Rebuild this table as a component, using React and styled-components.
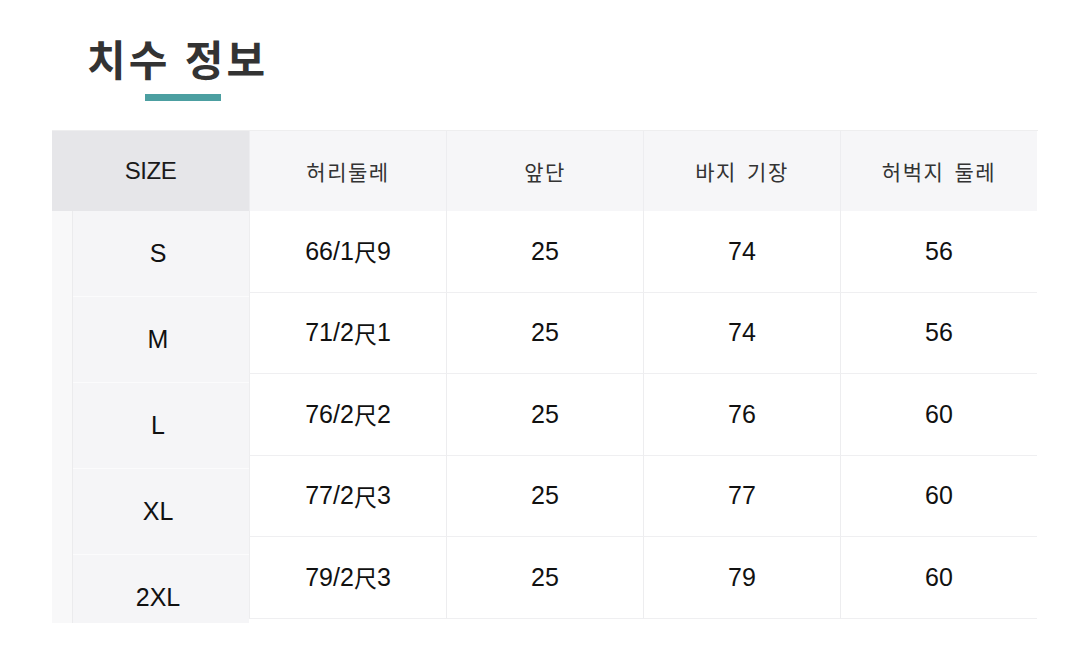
import React from "react";
import styled, { createGlobalStyle } from "styled-components";

const Global = createGlobalStyle`
  html, body { margin: 0; padding: 0; background: #ffffff; }
  body { font-family: "Liberation Sans", "Noto Sans CJK KR", sans-serif; }
`;

const Page = styled.div`
  width: 1089px;
  height: 652px;
  overflow: hidden;
  background: #fff;
  padding: 28px 0 0 52px;
  box-sizing: border-box;
`;

const TitleBlock = styled.div`
  display: flex;
  flex-direction: column;
  padding-left: 35px;
  height: 102px;
`;

const Title = styled.h1`
  margin: 0;
  font-family: "Noto Sans CJK KR", sans-serif;
  font-weight: 700;
  font-size: 42px;
  line-height: 60px;
  color: #333333;
  letter-spacing: 3px;
  word-spacing: 2px;
`;

const Underline = styled.div`
  width: 76px;
  height: 7px;
  background: #4c9fa1;
  margin: 6px 0 0 58px;
`;

const Table = styled.div`
  display: flex;
  width: 986px;
  height: 492px;
  overflow: hidden;
  border-top: 1px solid #eeeeef;
`;

const SizeCol = styled.div`
  width: 197px;
  display: flex;
  flex-direction: column;
  background: #f8f8f9;
  flex-shrink: 0;
`;

const SizeHead = styled.div`
  height: 80px;
  flex-shrink: 0;
  background: #e6e6e9;
  display: flex;
  align-items: center;
  justify-content: center;
  font-size: 24px;
  letter-spacing: -0.5px;
  color: #1a1a1a;
`;

const SizeBody = styled.div`
  flex: 1;
  min-height: 0;
  overflow: hidden;
  margin-left: 20px;
  border-left: 1px solid #ebebed;
  background: #f5f5f7;
  display: flex;
  flex-direction: column;
`;

const SizeCell = styled.div`
  height: 86px;
  flex-shrink: 0;
  display: flex;
  align-items: center;
  justify-content: center;
  padding-right: 6px;
  font-size: 25px;
  color: #111;
  border-bottom: 1px solid #fbfbfc;
  box-sizing: border-box;
`;

const Grid = styled.div`
  flex: 1;
  display: grid;
  grid-template-columns: repeat(4, 197px);
  grid-template-rows: 80px repeat(5, 81.5px);
`;

const HeadCell = styled.div`
  background: #f6f6f8;
  display: flex;
  align-items: center;
  justify-content: center;
  font-family: "Noto Sans CJK KR", sans-serif;
  font-size: 21px;
  letter-spacing: 1.5px;
  color: #333;
  border-left: 1px solid #ededf0;
  word-spacing: 4px;
`;

const Cell = styled.div`
  background: #fff;
  display: flex;
  align-items: center;
  justify-content: center;
  font-size: 25px;
  color: #111;
  border-left: 1px solid #ededef;
  border-bottom: 1px solid #efeff1;
  box-sizing: border-box;
`;

const Cjk = styled.span`
  font-family: "Noto Sans CJK SC", sans-serif;
  font-size: 23px;
`;

const headers = ["허리둘레", "앞단", "바지 기장", "허벅지 둘레"];
const sizes = ["S", "M", "L", "XL", "2XL"];
const rows = [
  ["66/1", "9", "25", "74", "56"],
  ["71/2", "1", "25", "74", "56"],
  ["76/2", "2", "25", "76", "60"],
  ["77/2", "3", "25", "77", "60"],
  ["79/2", "3", "25", "79", "60"],
];

export default function App() {
  return (
    <>
      <Global />
      <Page>
        <TitleBlock>
          <Title>치수 정보</Title>
          <Underline />
        </TitleBlock>
        <Table>
          <SizeCol>
            <SizeHead>SIZE</SizeHead>
            <SizeBody>
              {sizes.map((s) => (
                <SizeCell key={s}>{s}</SizeCell>
              ))}
            </SizeBody>
          </SizeCol>
          <Grid>
            {headers.map((h) => (
              <HeadCell key={h}>{h}</HeadCell>
            ))}
            {rows.map((r, i) => (
              <React.Fragment key={i}>
                <Cell>
                  {r[0]}
                  <Cjk>尺</Cjk>
                  {r[1]}
                </Cell>
                <Cell>{r[2]}</Cell>
                <Cell>{r[3]}</Cell>
                <Cell>{r[4]}</Cell>
              </React.Fragment>
            ))}
          </Grid>
        </Table>
      </Page>
    </>
  );
}
